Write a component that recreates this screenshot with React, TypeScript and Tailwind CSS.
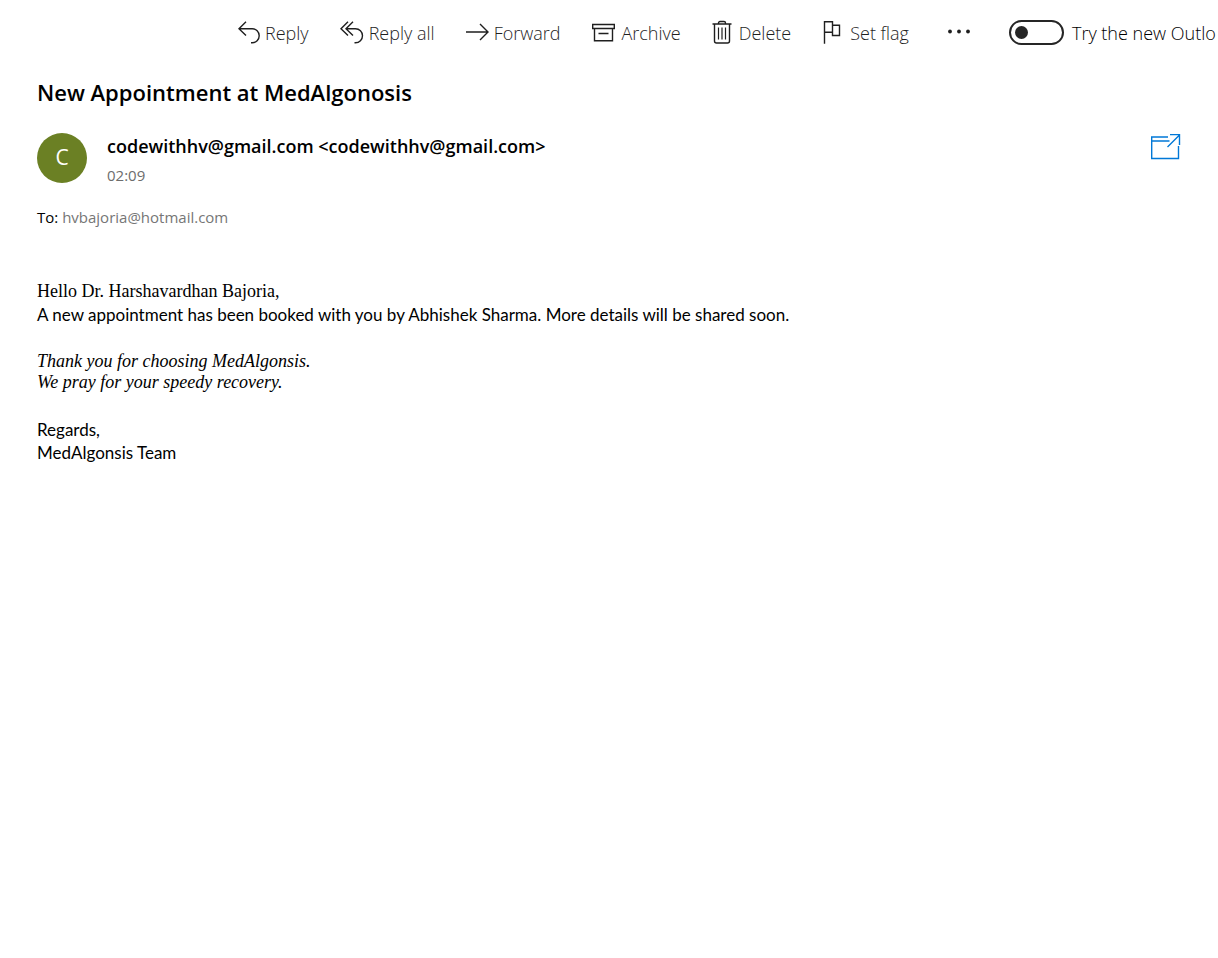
import type { ReactNode } from "react";

const UI_FONT = "font-['Segoe_UI','Open_Sans',sans-serif]";
const BODY_FONT = "font-['Lato',sans-serif]";
const SERIF_FONT = "font-['Liberation_Serif',serif]";

export default function App() {
  return (
    <div className={`min-h-screen bg-white text-black ${UI_FONT}`}>
      <Toolbar />
      <main className="px-[37px] pt-3">
        <h1 className="text-[22px] leading-8 font-semibold">New Appointment at MedAlgonosis</h1>
        <MessageHeader />
        <MessageBody />
      </main>
    </div>
  );
}

function Toolbar() {
  return (
    <header className="flex h-16 items-center overflow-hidden pl-[238px] text-[18px] font-light whitespace-nowrap text-[#1f1f1f]">
      <div role="toolbar" aria-label="Message actions" className="flex shrink-0 items-center gap-[31px]">
        <ToolbarButton label="Reply" icon={<ReplyIcon />} />
        <ToolbarButton label="Reply all" icon={<ReplyAllIcon />} />
        <ToolbarButton label="Forward" icon={<ForwardIcon />} />
        <ToolbarButton label="Archive" icon={<ArchiveIcon />} wide />
        <ToolbarButton label="Delete" icon={<TrashIcon />} wide />
        <ToolbarButton label="Set flag" icon={<FlagIcon />} wide />
        <button type="button" aria-label="More actions" className="ml-2">
          <svg viewBox="0 0 22 24" aria-hidden="true" className="h-6 w-[22px]" fill="currentColor">
            <circle cx="2" cy="11.5" r="1.9" />
            <circle cx="11" cy="11.5" r="1.9" />
            <circle cx="20" cy="11.5" r="1.9" />
          </svg>
        </button>
      </div>

      <label className="ml-[39px] flex shrink-0 items-center gap-2 text-black">
        <input type="checkbox" role="switch" className="peer sr-only" />
        <span className="flex h-[25px] w-[55px] items-center rounded-full border-2 border-[#262626] px-1 peer-checked:justify-end">
          <span className="size-[13px] rounded-full bg-[#262626]" />
        </span>
        <span className="pt-0.5 leading-6">Try the new Outlo</span>
      </label>
    </header>
  );
}

function ToolbarButton({ label, icon, wide = false }: { label: string; icon: ReactNode; wide?: boolean }) {
  return (
    <button type="button" className={`flex shrink-0 items-center ${wide ? "gap-[7px]" : "gap-[5px]"}`}>
      {icon}
      <span className="pt-0.5 leading-6">{label}</span>
    </button>
  );
}

function MessageHeader() {
  return (
    <section aria-label="Message details">
      <div className="mt-[25px] flex items-start">
        <div
          aria-hidden="true"
          className="flex size-[50px] shrink-0 items-center justify-center rounded-full bg-[#6b8024] text-[21px] text-white"
        >
          C
        </div>
        <div className="ml-5 grow">
          <p className="text-[18px] leading-[26px] font-semibold">codewithhv@gmail.com &lt;codewithhv@gmail.com&gt;</p>
          <time className="block text-[15px] leading-8 text-[#6d6d6d]">02:09</time>
        </div>
        <button type="button" aria-label="Open in new window" className="text-[#0078d7]">
          <OpenWindowIcon />
        </button>
      </div>
      <p className="mt-[14px] text-[15px] leading-6">
        To: <span className="text-[#767676]">hvbajoria@hotmail.com</span>
      </p>
    </section>
  );
}

function MessageBody() {
  return (
    <article className={`mt-[51px] text-[17px] leading-[23px] ${BODY_FONT}`}>
      <p className={`text-[18px] ${SERIF_FONT}`}>Hello Dr. Harshavardhan Bajoria,</p>
      <p>A new appointment has been booked with you by Abhishek Sharma. More details will be shared soon.</p>
      <p className={`mt-[25px] text-[18px] leading-[21px] italic ${SERIF_FONT}`}>
        Thank you for choosing MedAlgonsis.
        <br />
        We pray for your speedy recovery.
      </p>
      <p className="mt-[25px]">
        Regards,
        <br />
        MedAlgonsis Team
      </p>
    </article>
  );
}

function ReplyIcon() {
  return (
    <svg viewBox="0 0 22 24" aria-hidden="true" className="h-6 w-[22px]" fill="none" stroke="currentColor" strokeWidth="1.4">
      <path d="M8 1.8 1 8.7l7 6.9M1 8.7h13.2a7 7 0 0 1 0 14H13" />
    </svg>
  );
}

function ReplyAllIcon() {
  return (
    <svg viewBox="0 0 24 24" aria-hidden="true" className="h-6 w-6" fill="none" stroke="currentColor" strokeWidth="1.4">
      <path d="M8 1.8 1 8.7l7 6.9M13 1.8 6 8.7l7 6.9M6 8.7h9.5a7 7 0 0 1 0 14H14.5" />
    </svg>
  );
}

function ForwardIcon() {
  return (
    <svg viewBox="0 0 23 24" aria-hidden="true" className="h-6 w-[23px]" fill="none" stroke="currentColor" strokeWidth="1.4">
      <path d="M0 12h22.3M14 4l8 8-8 8" />
    </svg>
  );
}

function ArchiveIcon() {
  return (
    <svg viewBox="0 0 23 24" aria-hidden="true" className="h-6 w-[23px]" fill="none" stroke="currentColor" strokeWidth="1.4">
      <path d="M.7 4.5h21.6v4H.7zM2.5 8.5v12.3h18V8.5M6.5 13.5h10" />
    </svg>
  );
}

function TrashIcon() {
  return (
    <svg viewBox="0 0 20 24" aria-hidden="true" className="h-6 w-5" fill="none" stroke="currentColor" strokeWidth="1.4">
      <path d="M.5 4h19M2.5 4v17a2 2 0 0 0 2 2h11a2 2 0 0 0 2-2V4M6.5 4V3A1.5 1.5 0 0 1 8 1.5h4A1.5 1.5 0 0 1 13.5 3v1" />
      <path d="M6.5 7.5v12M10 7.5v12M13.5 7.5v12" strokeWidth="1.2" />
    </svg>
  );
}

function FlagIcon() {
  return (
    <svg viewBox="0 0 21 24" aria-hidden="true" className="h-6 w-[21px]" fill="none" stroke="currentColor" strokeWidth="1.4">
      <path d="M2.5 23.8V1.7h8v10.6h-8M10.5 5.2h7v10.3h-7v-3.2" />
    </svg>
  );
}

function OpenWindowIcon() {
  return (
    <svg viewBox="0 0 30 28" aria-hidden="true" className="h-7 w-[30px]" fill="none" stroke="currentColor" strokeWidth="1.4">
      <path d="M17 4H.7v21.5h26.8V13M.7 8h17.8M16.5 14 28.5 2M19 1.6h9.5V12" />
    </svg>
  );
}
